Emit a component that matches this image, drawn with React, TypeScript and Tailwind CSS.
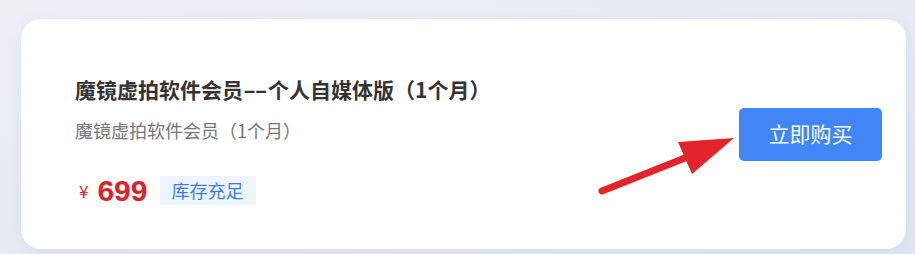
export default function App() {
  return (
    <div
      className="relative h-[254px] w-full overflow-hidden bg-gradient-to-br from-[#edf0f5] via-[#e6ebf4] to-[#dfe7f4] pl-[21px] pr-[9px] pt-[19px]"
      style={{ fontFamily: '"Noto Sans CJK SC", "Liberation Sans", sans-serif' }}
    >
      <div className="flex h-[230px] items-center justify-between rounded-[20px] bg-white pr-[24px] pl-[54px] shadow-[0_4px_16px_rgba(120,140,180,0.12)]">
        <div className="self-start pt-[56px]">
          <h1 className="text-[21px] font-bold leading-[29px] text-[#333333]">
            魔镜虚拍软件会员
            <span className="inline-block w-[25px] origin-left scale-x-[1.7] tracking-[-1px]">--</span>
            个人自媒体版（1个月）
          </h1>
          <p className="mt-[13px] text-[18px] leading-[26px] text-[#777777]">
            魔镜虚拍软件会员（1个月）
          </p>
          <div className="mt-[33px] flex items-center">
            <span className="ml-[4px] text-[17px] text-[#d6262b]">¥</span>
            <span
              className="ml-[9px] text-[30px] font-bold leading-[29px] text-[#d6262b]"
              style={{ fontFamily: '"Liberation Sans", Arial, sans-serif' }}
            >
              699
            </span>
            <span className="ml-[12px] flex h-[29px] items-center bg-[#eef5fe] px-[12px] text-[18px] text-[#3a7fe6]">
              库存充足
            </span>
          </div>
        </div>
        <button className="flex h-[53px] w-[143px] items-center justify-center rounded-[5px] bg-[#4285f4] text-[21px] text-white">
          立即购买
        </button>
      </div>
      <svg
        className="pointer-events-none absolute left-0 top-0"
        width="915"
        height="254"
        viewBox="0 0 915 254"
      >
        <line x1="602" y1="191" x2="690" y2="156" stroke="#e3242b" strokeWidth="7" strokeLinecap="round" />
        <polygon points="734,138 678,142 692,174" fill="#e3242b" />
      </svg>
    </div>
  );
}
